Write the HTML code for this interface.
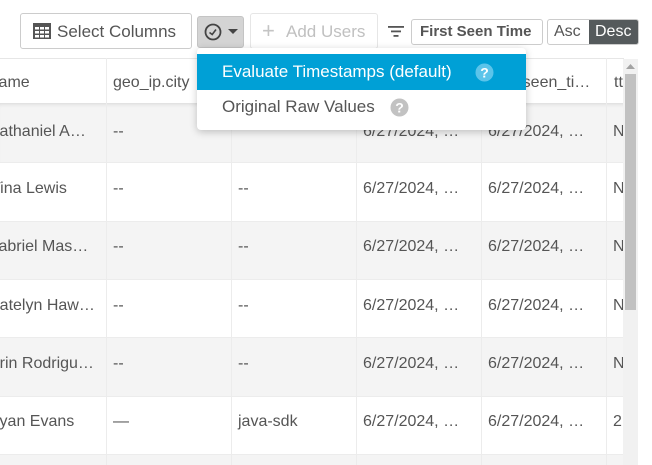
<!DOCTYPE html>
<html><head><meta charset="utf-8"><style>
*{box-sizing:border-box;margin:0;padding:0}
html,body{width:652px;height:465px;overflow:hidden}
body{background:#fff;font-family:"Liberation Sans",sans-serif;color:#555;position:relative}
.a{position:absolute;white-space:nowrap}
.btn{position:absolute;border:1px solid #ccc;border-radius:3px;background:#fff;height:36px;top:13px}
.row{position:absolute;left:0;width:624px;height:59px;border-top:1px solid #ececec}
.t{position:absolute;font-size:16px;color:#555;white-space:nowrap}
.v{position:absolute;top:58px;height:407px;width:1px;background:#ececec}
</style></head><body>
<div class="btn" style="left:20px;width:172px"></div>
<svg class="a" style="left:33px;top:23px" width="18" height="16" viewBox="0 0 18 16"><rect x="0" y="0" width="18" height="16" fill="#555"/><g fill="#fff"><rect x="2" y="4" width="4" height="2.5"/><rect x="7" y="4" width="4" height="2.5"/><rect x="12" y="4" width="4" height="2.5"/><rect x="2" y="8" width="4" height="2.5"/><rect x="7" y="8" width="4" height="2.5"/><rect x="12" y="8" width="4" height="2.5"/><rect x="2" y="12" width="4" height="2.5"/><rect x="7" y="12" width="4" height="2.5"/><rect x="12" y="12" width="4" height="2.5"/></g></svg>
<div class="a" style="left:57px;top:22px;font-size:17px;color:#555">Select Columns</div>
<div class="a" style="left:197px;top:16px;width:47px;height:32px;background:#d4d4d4;border:1px solid #c4c4c4;border-radius:3px"></div>
<svg class="a" style="left:204px;top:23px" width="18" height="18" viewBox="0 0 18 18"><circle cx="9" cy="9" r="7.5" fill="none" stroke="#444" stroke-width="1.8"/><path d="M5.5 9.5 L8.2 11.5 L12 6.5" fill="none" stroke="#444" stroke-width="1.6"/></svg>
<svg class="a" style="left:228px;top:29px" width="10" height="6"><path d="M0 0 L10 0 L5 5Z" fill="#444"/></svg>
<div class="btn" style="left:250px;width:128px;border-color:#e6e6e6"></div>
<div class="a" style="left:262px;top:21px;font-size:22px;color:#c4c4c4;line-height:20px">+</div>
<div class="a" style="left:286px;top:22px;font-size:17px;color:#c0c0c0">Add Users</div>
<svg class="a" style="left:388px;top:25px" width="16" height="14"><g fill="#555"><rect x="0" y="1" width="16" height="1.8"/><rect x="3" y="5.5" width="10" height="1.8"/><rect x="5.5" y="10" width="5" height="1.8"/></g></svg>
<div class="a" style="left:411px;top:19px;width:132px;height:26px;border:1px solid #ccc;border-radius:3px"></div>
<div class="a" style="left:420px;top:23px;font-size:15px;font-weight:bold;color:#555">First Seen Time</div>
<div class="a" style="left:547px;top:19px;width:92px;height:26px;border:1px solid #ccc;border-radius:3px;overflow:hidden"><div style="position:absolute;left:41px;top:0;width:51px;height:26px;background:#555a5c"></div></div>
<div class="a" style="left:554px;top:23px;font-size:16px;color:#555">Asc</div>
<div class="a" style="left:595px;top:23px;font-size:16px;color:#fff">Desc</div>
<div class="a" style="left:0;top:58px;width:624px;height:1px;background:#e6e6e6"></div>
<div class="row" style="top:103px;background:#f4f4f4;border-top:none;box-shadow:inset 0 4px 4px -3px rgba(0,0,0,.12)"></div>
<div class="row" style="top:162px;background:#fff"></div>
<div class="row" style="top:221px;background:#f4f4f4"></div>
<div class="row" style="top:279px;background:#fff"></div>
<div class="row" style="top:337px;background:#f4f4f4"></div>
<div class="row" style="top:396px;background:#fff"></div>
<div class="row" style="top:454px;height:11px;background:#f4f4f4"></div>
<div class="v" style="left:106px"></div><div class="v" style="left:231px"></div><div class="v" style="left:356px"></div><div class="v" style="left:481px"></div><div class="v" style="left:606px"></div>
<div class="t" style="left:-13px;top:74px">Name</div>
<div class="t" style="left:113px;top:74px">geo_ip.city</div>
<div class="t" style="left:488px;top:74px">first_seen_ti…</div>
<div class="t" style="left:614px;top:74px">tt</div>

<div class="t" style="left:-12px;top:123px">Nathaniel A…</div><div class="t" style="left:113px;top:123px">--</div><div class="t" style="left:363px;top:123px">6/27/2024, …</div><div class="t" style="left:488px;top:123px">6/27/2024, …</div><div class="t" style="left:613px;top:123px">N</div>
<div class="t" style="left:-9px;top:180px">Tina Lewis</div><div class="t" style="left:113px;top:180px">--</div><div class="t" style="left:238px;top:180px">--</div><div class="t" style="left:363px;top:180px">6/27/2024, …</div><div class="t" style="left:488px;top:180px">6/27/2024, …</div><div class="t" style="left:613px;top:180px">N</div>
<div class="t" style="left:-14px;top:238px">Gabriel Mas…</div><div class="t" style="left:113px;top:238px">--</div><div class="t" style="left:238px;top:238px">--</div><div class="t" style="left:363px;top:238px">6/27/2024, …</div><div class="t" style="left:488px;top:238px">6/27/2024, …</div><div class="t" style="left:613px;top:238px">N</div>
<div class="t" style="left:-11px;top:297px">Katelyn Haw…</div><div class="t" style="left:113px;top:297px">--</div><div class="t" style="left:238px;top:297px">--</div><div class="t" style="left:363px;top:297px">6/27/2024, …</div><div class="t" style="left:488px;top:297px">6/27/2024, …</div><div class="t" style="left:613px;top:297px">N</div>
<div class="t" style="left:-11px;top:355px">Erin Rodrigu…</div><div class="t" style="left:113px;top:355px">--</div><div class="t" style="left:238px;top:355px">--</div><div class="t" style="left:363px;top:355px">6/27/2024, …</div><div class="t" style="left:488px;top:355px">6/27/2024, …</div><div class="t" style="left:613px;top:355px">N</div>
<div class="t" style="left:-12px;top:413px">Ryan Evans</div><div class="t" style="left:113px;top:413px">—</div><div class="t" style="left:238px;top:413px">java-sdk</div><div class="t" style="left:363px;top:413px">6/27/2024, …</div><div class="t" style="left:488px;top:413px">6/27/2024, …</div><div class="t" style="left:613px;top:413px">2</div>
<div class="a" style="left:623px;top:59px;width:15px;height:406px;background:#f1f1f1"></div>
<svg class="a" style="left:626px;top:64px" width="9" height="6"><path d="M0 5 L4.5 0 L9 5Z" fill="#a3a3a3"/></svg>
<div class="a" style="left:625px;top:74px;width:11px;height:236px;background:#c1c1c1"></div>
<div class="a" style="left:197px;top:48px;width:329px;height:82px;background:#fff;border-radius:4px;box-shadow:0 2px 8px rgba(0,0,0,.22)"></div>
<div class="a" style="left:197px;top:54px;width:329px;height:36px;background:#00a0d6"></div>
<div class="a" style="left:222px;top:62px;font-size:17px;color:#fff">Evaluate Timestamps (default)</div>
<svg class="a" style="left:475px;top:63px" width="19" height="19"><circle cx="9.5" cy="9.5" r="9" fill="#5bc4ea"/><text x="9.5" y="14.5" font-family="Liberation Sans" font-weight="bold" font-size="14" fill="#fff" text-anchor="middle">?</text></svg>
<div class="a" style="left:222px;top:97px;font-size:17px;color:#555">Original Raw Values</div>
<svg class="a" style="left:390px;top:98px" width="19" height="19"><circle cx="9.5" cy="9.5" r="9" fill="#c2c2c2"/><text x="9.5" y="14.5" font-family="Liberation Sans" font-weight="bold" font-size="14" fill="#fff" text-anchor="middle">?</text></svg>
</body></html>
